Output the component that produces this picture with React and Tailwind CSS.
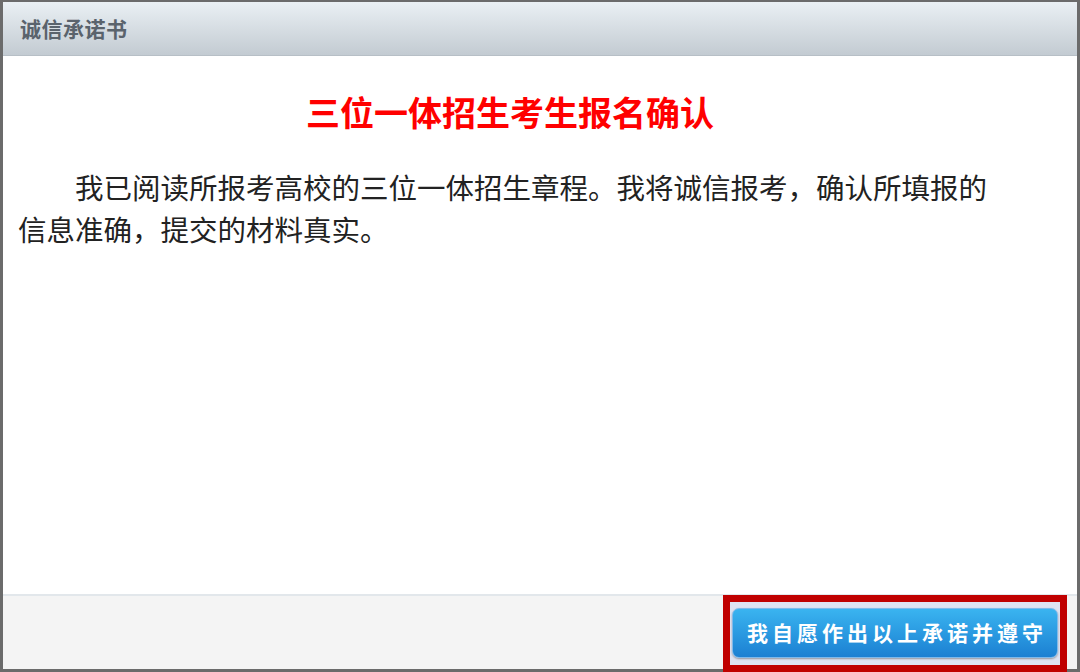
import React from 'react';

const cjk = { fontFamily: '"Noto Sans CJK SC", "Noto Sans", sans-serif' };

// ── Integrity pledge dialog ───────────────────────────────────────────────────
export default function App() {
  return (
    <div className="w-[1080px] h-[672px] bg-white" style={cjk}>
      <div className="h-full flex flex-col border-x-[3px] border-t-2 border-b-[3px] border-[#6b6b6b]">
        {/* Title bar */}
        <div className="h-[54px] shrink-0 flex items-center px-[17px] bg-gradient-to-b from-[#eaf0f4] to-[#c3cbd2] border-b border-[#b7bfc6]">
          <span className="text-[21px] font-bold text-[#5a636c] tracking-[0.5px]">诚信承诺书</span>
        </div>

        {/* Body */}
        <div className="flex-1 bg-white pl-[15px] pr-[80px] pt-[32px]">
          <h1 className="text-center text-[34px] font-bold text-[#ff0000] leading-[48px] pl-[5px]">
            三位一体招生考生报名确认
          </h1>
          <p className="mt-[30px] text-[28.5px] leading-[42px] text-[#222] indent-[57px]">
            我已阅读所报考高校的三位一体招生章程。我将诚信报考，确认所填报的信息准确，提交的材料真实。
          </p>
        </div>

        {/* Footer */}
        <div className="h-[75px] shrink-0 bg-[#f4f4f4] border-t-2 border-[#e2e7eb] flex justify-end items-start pr-[10px]">
          <div className="mt-[-1px] mb-[-3px] h-[77px] border-[7px] border-[#c00000] bg-[#dfe3f2] px-[2px] pt-[6px]">
            <button className="h-[50px] pl-[14px] pr-[10px] rounded-[7px] border border-[#7fb9ea] bg-gradient-to-b from-[#3ab4f0] to-[#1c80d2] text-white text-[21px] font-bold tracking-[4px] shadow-[0_1px_2px_rgba(0,0,0,0.35)]">
              我自愿作出以上承诺并遵守
            </button>
          </div>
        </div>
      </div>
    </div>
  );
}
